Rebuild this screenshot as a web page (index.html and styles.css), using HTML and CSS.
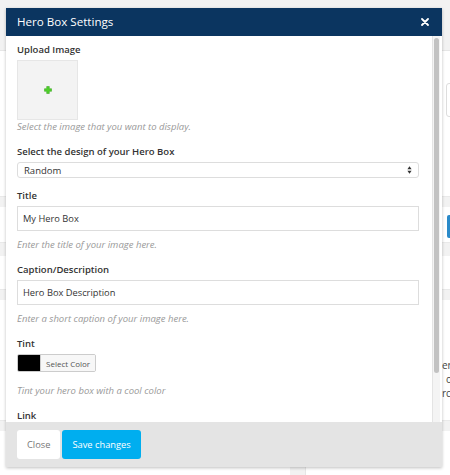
FILE: index.html
```html
<!DOCTYPE html>
<html>
<head>
<meta charset="utf-8">
<link rel="stylesheet" href="styles.css">
</head>
<body>
<div class="page">
  <div class="bg-band top"></div>
  <div class="bg-row r1"><span class="bg-field"></span></div>
  <div class="bg-band"></div>
  <div class="bg-row r2"><span class="bg-btn"></span></div>
  <div class="bg-band thick"></div>
  <div class="bg-row r3"></div>
  <div class="bg-band"></div>
  <div class="bg-row r4"><span class="bg-text"><span>er</span><span class="o">o</span><span>rc</span></span></div>
  <div class="bg-band"></div>
  <div class="bg-row r5"><span class="bg-box"></span></div>
</div>

<div class="modal">
  <div class="modal-header">
    <span class="modal-title">Hero Box Settings</span>
    <svg class="modal-close" width="8" height="8" viewBox="0 0 8 8"><path d="M1 1L7 7M7 1L1 7" stroke="#fff" stroke-width="1.8" stroke-linecap="round"/></svg>
  </div>
  <div class="modal-body">
    <div class="content">
      <div class="group">
        <div class="label">Upload Image</div>
        <div class="upload">
          <svg width="8" height="8" viewBox="0 0 8 8"><path d="M2.7 0.5h2.6v2.2h2.2v2.6H5.3v2.2H2.7V5.3H0.5V2.7h2.2z" fill="#4fd02a" stroke="#2f9e14" stroke-width="0.5"/></svg>
        </div>
        <div class="help first">Select the image that you want to display.</div>
      </div>
      <div class="group">
        <div class="label">Select the design of your Hero Box</div>
        <div class="select">
          <span>Random</span>
          <svg width="5" height="8" viewBox="0 0 5 8"><path d="M2.5 0.3L4.6 3.2H0.4z M2.5 7.7L4.6 4.8H0.4z" fill="#333"/></svg>
        </div>
      </div>
      <div class="group">
        <div class="label">Title</div>
        <div class="input">My Hero Box</div>
        <div class="help">Enter the title of your image here.</div>
      </div>
      <div class="group">
        <div class="label">Caption/Description</div>
        <div class="input">Hero Box Description</div>
        <div class="help">Enter a short caption of your image here.</div>
      </div>
      <div class="group">
        <div class="label">Tint</div>
        <div class="color-btn"><span class="swatch"></span><span class="color-text">Select Color</span></div>
        <div class="help tint">Tint your hero box with a cool color</div>
      </div>
      <div class="group">
        <div class="label">Link</div>
        <div class="input"></div>
      </div>
    </div>
    <div class="scrollbar"><div class="thumb"></div></div>
  </div>
  <div class="modal-footer">
    <span class="btn btn-close">Close</span>
    <span class="btn btn-save">Save changes</span>
  </div>
</div>
</body>
</html>
```
FILE: styles.css
```css
html, body {
  margin: 0;
  padding: 0;
}
body {
  width: 450px;
  height: 475px;
  overflow: hidden;
  background: #fff;
  font-family: "Open Sans", "Liberation Sans", sans-serif;
  position: relative;
}
.page {
  display: flex;
  flex-direction: column;
}
.bg-band {
  height: 10px;
  background: #f2f2f2;
  border-top: 1px solid #e9e9e9;
}
.bg-band.top {
  height: 50px;
  border-top: 0;
  border-bottom: 1px solid #e6e6e6;
}
.bg-band.thick {
  height: 13px;
}
.bg-row {
  background: #fff;
  position: relative;
}
.bg-row.r1 { height: 145px; }
.bg-row.r2 { height: 35px; }
.bg-row.r3 { height: 33px; }
.bg-row.r4 { height: 120px; }
.bg-row.r5 { height: 40px; }
.bg-field {
  position: absolute;
  left: 446px;
  top: 32px;
  width: 10px;
  height: 32px;
  border: 1px solid #ddd;
  border-radius: 3px;
}
.bg-btn {
  position: absolute;
  left: 447px;
  top: 8px;
  width: 8px;
  height: 23px;
  background: #2a8ac9;
  border-radius: 2px;
}
.bg-text {
  position: absolute;
  left: 442px;
  top: 58px;
  display: flex;
  flex-direction: column;
  font-size: 10px;
  line-height: 14px;
  color: #444;
}
.bg-text .o {
  margin-left: 4px;
}
.bg-box {
  position: absolute;
  left: 290px;
  top: 28px;
  width: 15px;
  height: 20px;
  background: #f2f2f2;
  border-right: 1px solid #e6e6e6;
}

.modal {
  position: absolute;
  left: 6px;
  top: 8px;
  width: 436px;
  height: 459px;
  background: #fff;
  box-shadow: 0 1px 3px rgba(0,0,0,0.25);
  display: flex;
  flex-direction: column;
}
.modal-header {
  height: 28px;
  background: #0b3560;
  display: flex;
  align-items: center;
  justify-content: space-between;
  padding: 0 13px 0 11px;
  color: #fff;
}
.modal-title {
  font-size: 11.6px;
  line-height: 16px;
}
.modal-body {
  flex: 1;
  display: flex;
  overflow: hidden;
}
.content {
  flex: 1;
  padding: 6px 13px 0 11px;
  overflow: hidden;
}
.scrollbar {
  width: 5px;
  margin-right: 2px;
  background: #f4f4f4;
  border-left: 1px solid #e4e4e4;
  padding: 2px 1px 0 1px;
}
.thumb {
  height: 335px;
  background: #c2c2c2;
  border-radius: 3px;
}
.group {
  margin-bottom: 10px;
}
.label {
  font-size: 9.5px;
  font-weight: 600;
  color: #333;
  line-height: 16px;
  margin-bottom: 2px;
}
.upload {
  width: 59px;
  height: 58px;
  background: #f3f3f3;
  border: 1px solid #e6e6e6;
  display: flex;
  align-items: center;
  justify-content: center;
}
.help {
  font-size: 9.5px;
  font-style: italic;
  color: #999;
  line-height: 14px;
  margin-top: 7px;
}
.help.first {
  margin-top: 0;
}
.help.tint {
  margin-top: 8px;
}
.select {
  height: 14px;
  border: 1px solid #ddd;
  border-radius: 3px;
  display: flex;
  align-items: center;
  justify-content: space-between;
  padding: 0 6px 0 6px;
  font-size: 9.5px;
  color: #333;
}
.input {
  height: 23px;
  border: 1px solid #ddd;
  display: flex;
  align-items: center;
  padding: 0 5px;
  font-size: 9.3px;
  color: #333;
}
.color-btn {
  display: inline-flex;
  height: 18px;
  border: 1px solid #ccc;
  border-radius: 2px;
  overflow: hidden;
  box-sizing: border-box;
  margin-top: -1px;
}
.swatch {
  width: 22px;
  background: #000;
}
.color-text {
  display: flex;
  align-items: center;
  padding: 0 5px;
  font-size: 8px;
  color: #555;
  background: #f7f7f7;
  border-left: 1px solid #ccc;
}
.modal-footer {
  height: 45px;
  background: #e4e4e4;
  display: flex;
  align-items: center;
  padding: 0 11px;
  gap: 2px;
}
.btn {
  height: 29px;
  display: flex;
  align-items: center;
  border-radius: 3px;
  font-size: 9.3px;
  padding: 0 10px;
}
.btn-close {
  background: #fff;
  color: #777;
}
.btn-save {
  background: #00aeef;
  color: #fff;
}
```
